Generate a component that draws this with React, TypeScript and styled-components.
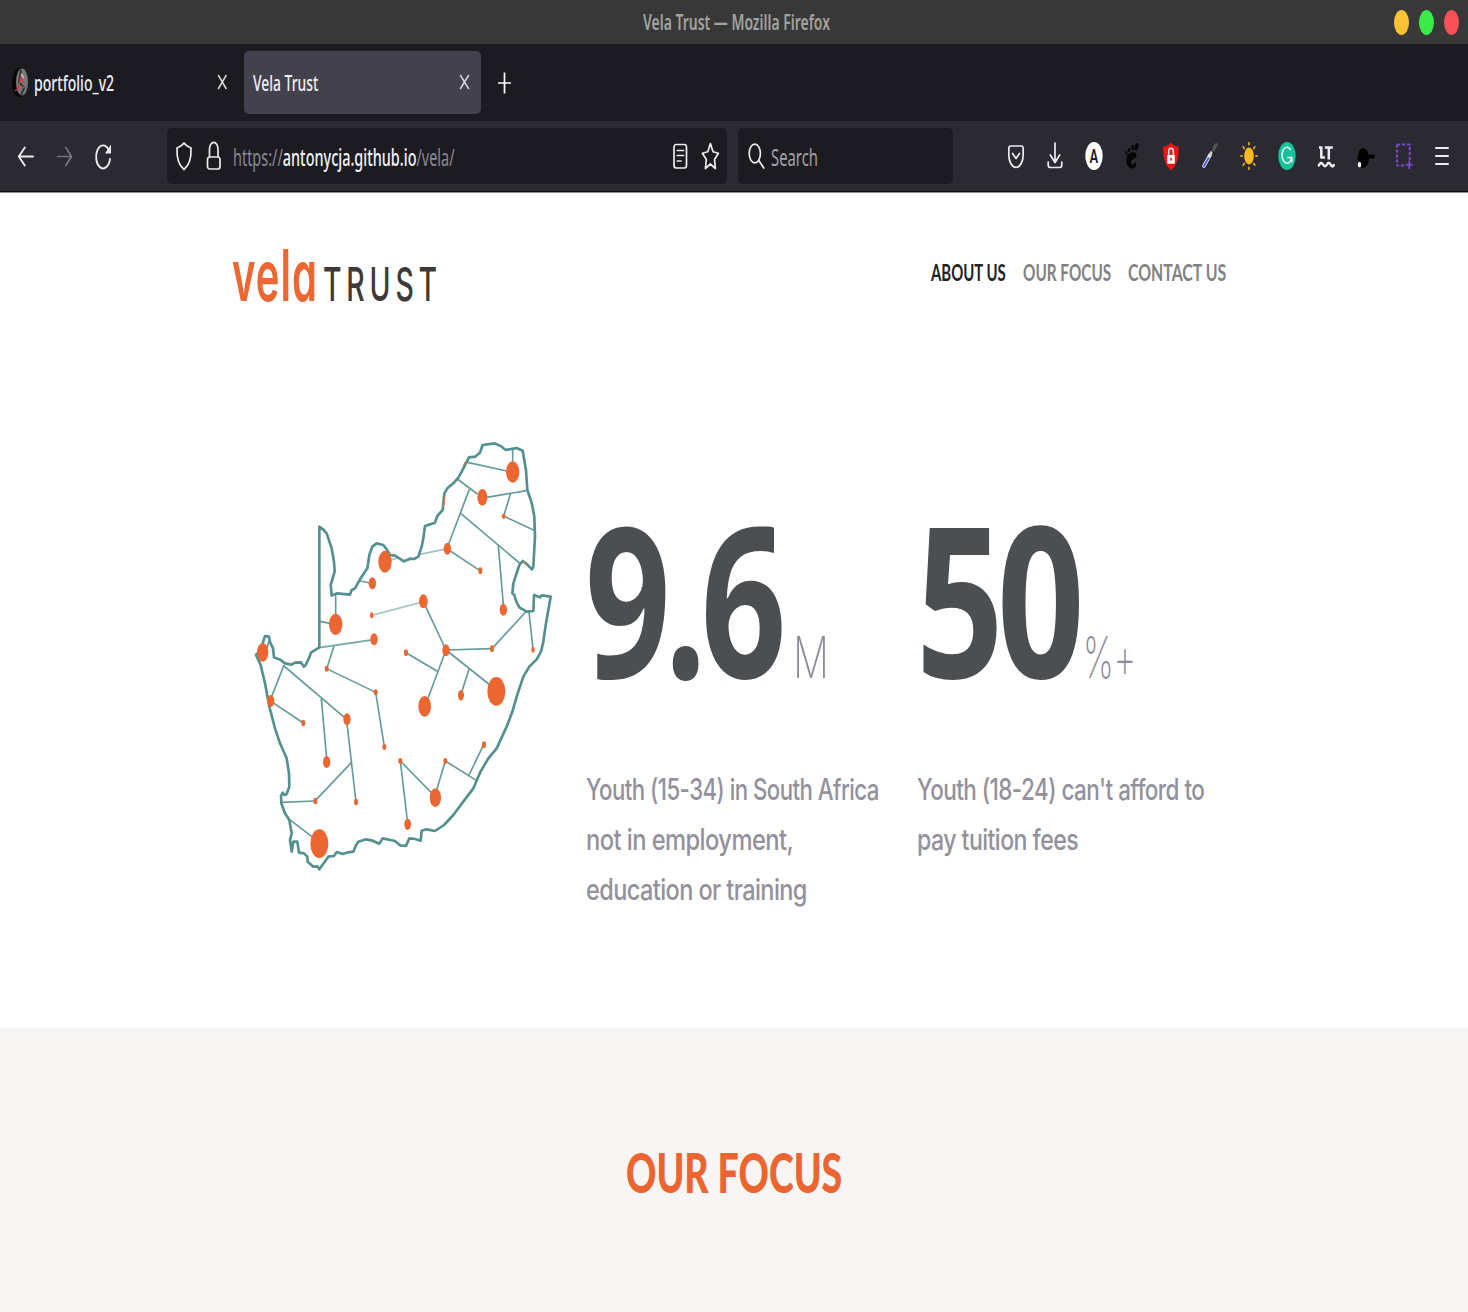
import React, { useLayoutEffect, useRef, useState } from "react";
import styled, { createGlobalStyle } from "styled-components";

const uiFont = `"Noto Sans", "Open Sans", sans-serif`;
const pageFont = `Inter, "Open Sans", sans-serif`;
const displayFont = `Lato, "Open Sans", sans-serif`;
const numberFont = `"Open Sans", "Noto Sans", sans-serif`;

const GlobalStyle = createGlobalStyle`
  *, *::before, *::after { box-sizing: border-box; }
  body { margin: 0; background: #fff; font-family: ${pageFont}; }
`;

/* Text condensed horizontally so that it fills a given width */
const FitBox = styled.span<{ $w: number }>`
  display: inline-block;
  flex: none;
  width: ${(p) => p.$w}px;
  white-space: nowrap;
`;
const FitInner = styled.span`
  display: inline-block;
  transform-origin: 0 50%;
  white-space: pre;
`;

function Fit({ w, children }: { w: number; children: React.ReactNode }) {
  const ref = useRef<HTMLSpanElement>(null);
  const [scale, setScale] = useState(1);
  useLayoutEffect(() => {
    if (ref.current) setScale(w / ref.current.offsetWidth);
  }, [w]);
  return (
    <FitBox $w={w}>
      <FitInner ref={ref} style={{ transform: `scaleX(${scale})` }}>
        {children}
      </FitInner>
    </FitBox>
  );
}

const Screen = styled.div`
  width: 1468px;
  height: 1312px;
  display: flex;
  flex-direction: column;
  overflow: hidden;
`;

const TitleBar = styled.header`
  height: 44px;
  flex: none;
  display: grid;
  grid-template-columns: 1fr auto 1fr;
  align-items: center;
  background: #383838;
  padding: 1px 9.5px 0 0;
  font: 600 21.5px/41px ${uiFont};
  color: #a3a39f;
`;
const WindowTitle = styled.div`
  grid-column: 2;
  margin-left: 14px;
  height: 43px;
`;
const WindowButtons = styled.div`
  display: flex;
  justify-content: flex-end;
  gap: 10px;
`;
const WindowButton = styled.i<{ $c: string }>`
  width: 15px;
  height: 25px;
  border-radius: 50%;
  background: ${(p) => p.$c};
`;

const TabStrip = styled.nav`
  height: 77px;
  flex: none;
  display: flex;
  align-items: center;
  background: #1c1b22;
  font: 500 22px/60px ${uiFont};
  color: #f0f0f4;
`;
const Tab = styled.div<{ $active?: boolean; $w: number }>`
  width: ${(p) => p.$w}px;
  height: 63px;
  display: flex;
  align-items: center;
  border-radius: 5px;
  padding: 0 ${(p) => (p.$active ? 11.5 : 12)}px 1px ${(p) => (p.$active ? 9 : 12)}px;
  background: ${(p) => (p.$active ? "#42414d" : "transparent")};
  svg:last-child { margin-left: auto; }
`;
const Favicon = styled.svg`
  margin-right: 6px;
`;
const NewTab = styled.svg`
  margin-left: 16px;
`;

const Toolbar = styled.div`
  height: 71px;
  flex: none;
  display: flex;
  align-items: center;
  background: #2b2a33;
  padding: 0 13.5px 1px 14px;
  font: 400 24px/56px ${uiFont};
`;
const Shadow = styled.div`
  height: 1px;
  flex: none;
  background: #8d8d90;
`;
const HardLine = styled.div`
  height: 1px;
  flex: none;
  margin-top: -1px;
  background: #0c0c0d;
`;
const NavIcons = styled.div`
  display: flex;
  width: 153px;
  gap: 14.7px;
`;
const Field = styled.div<{ $w: number; $left: number }>`
  width: ${(p) => p.$w}px;
  height: 56px;
  margin-right: 11px;
  padding: 0 5px 0 ${(p) => p.$left}px;
  display: flex;
  align-items: center;
  border-radius: 5px;
  background: #1c1b22;
`;
const FieldGap = styled.span`
  width: 6px;
`;
const Address = styled.div<{ $left: number; $c: string }>`
  flex: 1;
  height: 56px;
  margin-left: ${(p) => p.$left}px;
  padding-top: 1px;
  color: ${(p) => p.$c};
  b { font-weight: 500; color: #f4f4f8; }
`;
const Extensions = styled.div`
  flex: 1;
  display: flex;
  justify-content: space-between;
  margin-left: 40px;
`;
const Glyph = styled.svg`
  width: 24px;
  height: 36px;
  flex: none;
  overflow: visible;
  fill: none;
  stroke: #ececf1;
  stroke-width: 1.7;
  stroke-linecap: round;
  stroke-linejoin: round;
  text { stroke: none; }
`;
function Icon({ children }: { children: React.ReactNode }) {
  return <Glyph viewBox="0 0 24 36">{children}</Glyph>;
}

const SiteHeader = styled.header`
  height: 162px;
  flex: none;
  display: flex;
  align-items: center;
  justify-content: space-between;
  padding: 0 241.5px 0 232px;
`;
const Logo = styled.div`
  display: flex;
  align-items: baseline;
  height: 80px;
  padding-top: 3px;
`;
const LogoMark = styled.span`
  font: 600 71px/76px ${pageFont};
  font-feature-settings: "cv11";
  letter-spacing: 2px;
  color: #ee6730;
`;
const LogoWord = styled.span`
  margin-left: 5px;
  font: 500 47px/76px ${pageFont};
  letter-spacing: 8px;
  color: #3f3a38;
`;
const Menu = styled.nav`
  display: flex;
  gap: 17px;
  height: 44px;
  font: 700 23.5px/40px ${displayFont};
`;
const MenuItem = styled.a<{ $current?: boolean }>`
  color: ${(p) => (p.$current ? "#222222" : "#828282")};
`;

const Hero = styled.section`
  height: 673px;
  flex: none;
  display: flex;
  align-items: flex-start;
  padding: 75px 0 0 240px;
`;
const MapDrawing = styled.svg`
  width: 330px;
  height: 450px;
  flex: none;
  fill: none;
  stroke: #54908f;
  stroke-linejoin: round;
`;
const Stats = styled.div`
  display: grid;
  grid-template-columns: 331px 331px;
  padding: 66px 0 0 15px;
`;
const Figure = styled.div`
  height: 200px;
  display: flex;
  align-items: baseline;
  font: 700 210px/202px ${numberFont};
  letter-spacing: -9px;
  color: #4c4f51;
`;
const Unit = styled.span<{ $left: number }>`
  margin-left: ${(p) => p.$left}px;
  font: 200 58px/60px ${pageFont};
  letter-spacing: 0;
  font-feature-settings: "calt" 0;
  color: #8d8b96;
`;
const Caption = styled.p`
  margin: 69px 0 0 0.5px;
  font: 450 29.5px/49.8px ${pageFont};
  font-feature-settings: "calt" 0;
  letter-spacing: -0.7px;
  color: #93919b;
  display: flex;
  flex-direction: column;
`;

const Focus = styled.section`
  flex: 1;
  background: #f7f6f4;
  padding-top: 114px;
  text-align: center;
`;
const FocusTitle = styled.h2`
  margin: 0;
  font: 900 55px/60px ${displayFont};
  color: #ec6530;
`;

const outline =
  "238,290 238,652 213,668 208,682 197,705 191,710 183,697 165,698 155,704 135,700 122,690 102,682 99,655 90,636 87,620 75,618 68,640 62,660 48,675 62,705 75,760 88,830 105,895 120,940 140,985 147,1030 148,1070 140,1092 133,1095 128,1088 123,1098 124,1120 135,1150 148,1170 155,1210 150,1230 155,1265 160,1235 172,1235 177,1268 192,1270 202,1280 203,1295 220,1310 232,1309 238,1318 252,1298 265,1280 282,1278 290,1266 308,1272 325,1267 340,1265 348,1246 355,1235 378,1228 398,1232 418,1241 428,1225 465,1233 480,1246 498,1248 508,1225 525,1227 542,1232 545,1202 560,1198 585,1203 612,1185 640,1155 672,1112 700,1075 720,1028 745,985 770,955 800,890 818,842 830,800 850,740 868,710 890,688 903,665 910,635 918,580 932,500 905,496 900,502 882,495 880,543 860,545 838,532 828,513 823,495 817,490 820,460 838,405 848,393 860,402 876,418 880,410 885,320 883,260 875,218 862,180 858,120 848,62 830,54 797,60 785,50 765,40 728,45 720,68 705,80 687,82 665,125 655,143 640,160 622,175 613,190 608,240 592,258 585,278 555,288 550,325 545,350 535,380 522,387 510,386 492,394 465,377 450,375 440,358 430,345 410,340 397,350 388,375 382,415 360,448 345,475 335,480 330,494 290,490 275,497 272,465 284,425 282,395 275,355 260,310 248,297";

const links: [number, number, number, number, number?][] = [
  [683, 97, 800, 123], [818, 58, 818, 95], [652, 147, 712, 192], [740, 202, 860, 182],
  [812, 190, 792, 255], [792, 259, 882, 301], [688, 178, 626, 342], [662, 250, 842, 402],
  [775, 347, 790, 525], [622, 357, 720, 422], [540, 373, 612, 358, 0.55], [445, 392, 475, 384, 0.5],
  [360, 453, 390, 459], [287, 493, 287, 555], [240, 574, 270, 580], [395, 556, 540, 518, 0.5],
  [550, 515, 618, 660], [618, 660, 756, 656], [756, 656, 857, 546], [867, 546, 879, 658],
  [238, 653, 402, 629, 0.8], [282, 649, 260, 716], [260, 716, 407, 787, 0.8], [407, 787, 433, 950],
  [498, 668, 592, 724], [618, 660, 562, 810], [618, 660, 750, 765], [687, 718, 664, 790],
  [132, 705, 95, 800], [132, 708, 320, 868], [93, 814, 190, 879], [244, 806, 260, 985],
  [321, 880, 348, 1116], [334, 998, 226, 1112], [124, 1117, 226, 1113], [148, 1168, 216, 1220],
  [481, 993, 503, 1180], [481, 993, 578, 1092], [616, 993, 590, 1080], [616, 993, 710, 1052],
  [731, 944, 687, 1035],
];

const towns: [number, number, number, number][] = [
  [818, 126, 20, 32], [727, 202, 15, 25], [791, 259, 6, 8], [622, 356, 11, 18], [721, 422, 6, 10],
  [435, 395, 20, 33], [397, 460, 11, 18], [287, 583, 20, 32], [395, 556, 5, 9], [550, 514, 13, 21],
  [402, 628, 11, 18], [498, 668, 6, 10], [618, 661, 11, 18], [756, 656, 6, 10], [790, 539, 11, 18],
  [879, 659, 5, 9], [68, 667, 17, 28], [92, 813, 11, 18], [190, 879, 6, 10], [260, 716, 6, 9],
  [407, 787, 6, 9], [321, 868, 11, 18], [260, 996, 11, 18], [433, 951, 6, 9], [226, 1113, 6, 10],
  [348, 1116, 6, 10], [238, 1241, 27, 43], [554, 829, 19, 31], [663, 796, 9, 16], [769, 784, 27, 43],
  [732, 944, 6, 10], [616, 993, 6, 9], [586, 1103, 17, 28], [503, 1183, 10, 17], [481, 993, 6, 9],
];

function CountryMap() {
  return (
    <MapDrawing viewBox="0 0 990 1350">
      {links.map(([x1, y1, x2, y2, o], i) => (
        <line key={i} x1={x1} y1={y1} x2={x2} y2={y2} strokeWidth="5" opacity={o ?? 0.9} />
      ))}
      <polygon points={outline} strokeWidth="8" />
      <path d="M80 655 L88 632" strokeWidth="5" />
      <g fill="#ec6631" stroke="none">
        {towns.map(([x, y, rx, ry], i) => (
          <ellipse key={i} cx={x} cy={y} rx={rx} ry={ry} />
        ))}
        <path d="M611 193 Q619 212 608 235Z M681 94 L668 112 L672 98Z M850 395 L863 406 L860 397Z" />
      </g>
    </MapDrawing>
  );
}

const Cross = () => (
  <svg width="11" height="18" viewBox="0 0 11 18" stroke="#d6d6dc" strokeWidth="1.5">
    <path d="M1.2 2 L9.8 16 M9.8 2 L1.2 16" />
  </svg>
);

export default function App() {
  return (
    <Screen>
      <GlobalStyle />
      <TitleBar>
        <WindowTitle><Fit w={187}>Vela Trust — Mozilla Firefox</Fit></WindowTitle>
        <WindowButtons>
          <WindowButton $c="#fcc236" />
          <WindowButton $c="#3aea49" />
          <WindowButton $c="#f75057" />
        </WindowButtons>
      </TitleBar>

      <TabStrip>
        <Tab $w={244}>
          <Favicon width="16" height="29" viewBox="0 0 16 29">
            <ellipse cx="7.5" cy="14.5" rx="7.5" ry="14.5" fill="#080808" />
            <ellipse cx="10" cy="14" rx="6" ry="13.5" fill="#77777a" />
            <path d="M9 2 L7 14 L12 20 L9 27" fill="none" stroke="#333" strokeWidth="2" />
            <path d="M3 23 L6 21 L9 9 L12 15 M7 17 L12 20" fill="none" stroke="#dc3c46" strokeWidth="1.3" />
            <path d="M9 6 L12 10" stroke="#c8c8c8" strokeWidth="1.4" />
          </Favicon>
          <Fit w={80}>portfolio_v2</Fit>
          <svg width="16" height="18" viewBox="0 0 16 18" stroke="#d6d6dc" strokeWidth="1.5">
            <path d="M2.2 2 L10.4 16 M10.4 2 L2.2 16" />
          </svg>
        </Tab>
        <Tab $w={237} $active>
          <Fit w={65}>Vela Trust</Fit>
          <Cross />
        </Tab>
        <NewTab width="15" height="24" viewBox="0 0 15 24" stroke="#fbfbfe" strokeWidth="1.7">
          <path d="M7.5 1.5 V22.5 M1 12 H14" />
        </NewTab>
      </TabStrip>

      <Toolbar>
        <NavIcons>
          <Icon><path d="M19 18.5 H4.800 M10.800 9.500 L4.800 18.500 L10.800 27.500" strokeWidth="1.900" /></Icon>
          <Icon><path d="M4.500 18.500 H18.500 M12.800 9.500 L18.500 18.500 L12.800 27.500" stroke="#77767d" /></Icon>
          <Icon>
            <path d="M19 21 A7 11.500 0 1 1 17.500 11.500" strokeWidth="1.900" />
            <path d="M20 6.500 V15.500 H14 Z" fill="#ececf1" stroke="none" />
          </Icon>
        </NavIcons>
        <Field $w={560} $left={5}>
          <Icon><path d="M12 5 C14 8 17 9 19 10 C19.5 20 17.5 27 12 31.5 C6.500 27 4.500 20 5 10 C7 9 10 8 12 5Z" /></Icon>
          <FieldGap />
          <Icon>
            <path d="M7.500 19 H16 A2 3 0 0 1 18 22 V28 A2 3 0 0 1 16 31 H7.500 A2 3 0 0 1 5.500 28 V22 A2 3 0 0 1 7.500 19Z M7.500 19 V11 A4.200 6.500 0 0 1 16 11 V19" />
          </Icon>
          <Address $left={6.5} $c="#8a8a91"><Fit w={221.5}>https://<b>antonycja.github.io</b>/vela/</Fit></Address>
          <Icon>
            <rect x="6" y="6.500" width="12.500" height="23.500" rx="2" ry="3" />
            <path d="M9.300 12.500 H15.500 M9.300 17.500 H15.500 M9.300 23 H13" />
          </Icon>
          <FieldGap />
          <Icon><path d="M12.400 5.500 L15 13.800 L20.400 15.300 L16.500 21.500 L17.400 30.500 L12.400 26 L7.400 30.500 L8.300 21.500 L4.400 15.300 L9.800 13.800 Z" /></Icon>
        </Field>
        <Field $w={215} $left={6}>
          <Icon>
            <ellipse cx="10.800" cy="15.500" rx="5.600" ry="9.300" />
            <path d="M14.800 22.500 L19.800 30" />
          </Icon>
          <Address $left={3} $c="#a2a2a8"><Fit w={47}>Search</Fit></Address>
        </Field>
        <Extensions>
          <Icon>
            <path d="M6.500 8 H17.500 Q19.200 8 19.200 11 V17 A7.200 12.300 0 0 1 4.800 17 V11 Q4.800 8 6.500 8Z" />
            <path d="M8.500 15.500 L12 20.500 L15.500 15.500" />
          </Icon>
          <Icon><path d="M12 5 V24 M7.300 17 L12 24.500 L16.700 17 M5.200 24 V26.500 Q5.200 29.500 7 29.500 H17 Q18.800 29.500 18.800 26.500 V24" /></Icon>
          <Icon>
            <ellipse cx="12" cy="18" rx="8.700" ry="14" fill="#fff" stroke="none" />
            <text transform="translate(12 25) scale(.62 1)" textAnchor="middle" fontFamily="Lato, sans-serif" fontWeight="900" fontSize="19" fill="#222">A</text>
          </Icon>
          <Icon>
            <g fill="#050505" stroke="none">
              <ellipse cx="6.300" cy="15" rx="1.100" ry="2" />
              <ellipse cx="9.200" cy="12" rx="1.200" ry="2.300" />
              <ellipse cx="12.600" cy="9.500" rx="1.300" ry="2.700" />
              <ellipse cx="16.500" cy="8.800" rx="1.900" ry="3.800" transform="rotate(14 16.500 8.800)" />
              <path d="M16.500 17 C16 12 6.500 14 6.300 21 C6 27 9 31 12.500 30.500 C16 30 17 26 15.500 23.500 L14 26 C11.500 28 10 24 11.800 22.500 C14 21 16.500 20 16.500 17Z" />
            </g>
          </Icon>
          <Icon>
            <path d="M12 4.500 C14 7 17 8.500 19.700 8.500 C20 20 18 27 12 32.500 C6 27 4 20 4.300 8.500 C7 8.500 10 7 12 4.500Z" fill="#f11313" stroke="none" />
            <rect x="8.200" y="17" width="7.600" height="8.800" rx=".8" fill="#fff" stroke="none" />
            <path d="M9.700 17 V13.500 A2.300 3.300 0 0 1 14.300 13.500 V17" strokeWidth="1.500" />
            <ellipse cx="12" cy="21.200" rx=".8" ry="1.700" fill="#f11313" stroke="none" />
          </Icon>
          <Icon>
            <path d="M6 28 L12 17" stroke="#f4f6ff" strokeWidth="3.600" />
            <path d="M6 28 L10.500 20" stroke="#3f66cf" strokeWidth="2" />
            <path d="M12 17 L14.500 12.500" stroke="#cfcfcf" strokeWidth="2.600" />
            <path d="M12.700 10.500 L16.500 16" stroke="#1d1d1d" strokeWidth="1.500" />
            <path d="M15.300 12 L18.300 6.500" stroke="#55534f" strokeWidth="3" />
          </Icon>
          <Icon>
            <ellipse cx="12" cy="18" rx="4.800" ry="8.500" fill="#fcb91e" stroke="none" />
            <path d="M12 4.700 V6.500 M12 29.500 V31.300 M4 18 H5 M19 18 H20 M6.200 8.800 L7.300 10.500 M17.800 8.800 L16.700 10.500 M6.200 27.200 L7.300 25.500 M17.800 27.200 L16.700 25.500" stroke="#dca322" strokeWidth="1.800" />
          </Icon>
          <Icon>
            <ellipse cx="12" cy="18" rx="8.700" ry="14" fill="#15c39a" stroke="none" />
            <path d="M15.500 11.500 A5 8 0 1 0 16.800 19.500 H12.800 M16.800 19.500 V24" strokeWidth="1.600" />
          </Icon>
          <Icon>
            <path d="M7.300 8.500 V19.500 H11 M10.800 9.500 H18.800 M14.800 8.500 V21.500 M5 9.500 H8" strokeWidth="2.500" strokeLinecap="butt" />
            <path d="M4.800 27.500 Q7 23 9 26.500 T13 26.500 T16.500 26.500 T19.800 27" strokeWidth="2.500" />
          </Icon>
          <Icon>
            <ellipse cx="10.200" cy="20" rx="5.700" ry="10" fill="#000" stroke="none" />
            <path d="M14 18.500 H20" stroke="#000" strokeWidth="4" />
            <ellipse cx="6.500" cy="26.500" rx="1.700" ry="2.700" fill="#fff" stroke="none" />
          </Icon>
          <Icon>
            <path d="M5 6.500 H17.800 V22 M5 6.500 V27.500 H14" stroke="#7449c4" strokeWidth="2.200" strokeDasharray="3.200 1.800" strokeLinecap="butt" />
            <path d="M17.300 22.500 V31 M14 26.800 H20.500" stroke="#7449c4" strokeWidth="2" strokeLinecap="butt" />
          </Icon>
          <Icon><path d="M6 10 H18 M6 18 H18 M6 26 H18" strokeWidth="2" /></Icon>
        </Extensions>
      </Toolbar>
      <HardLine />
      <Shadow />

      <SiteHeader>
        <Logo>
          <LogoMark><Fit w={86}>vela</Fit></LogoMark>
          <LogoWord><Fit w={119}>TRUST</Fit></LogoWord>
        </Logo>
        <Menu>
          <MenuItem $current><Fit w={75}>ABOUT US</Fit></MenuItem>
          <MenuItem><Fit w={88}>OUR FOCUS</Fit></MenuItem>
          <MenuItem><Fit w={98.5}>CONTACT US</Fit></MenuItem>
        </Menu>
      </SiteHeader>

      <Hero>
        <CountryMap />
        <Stats>
          <div>
            <Figure>
              <Fit w={195}>9.6</Fit>
              <Unit $left={12.5}><Fit w={36}>M</Fit></Unit>
            </Figure>
            <Caption>
              <Fit w={293}>Youth (15-34) in South Africa</Fit>
              <Fit w={207.5}>not in employment,</Fit>
              <Fit w={220.5}>education or training</Fit>
            </Caption>
          </div>
          <div>
            <Figure>
              <Fit w={162}>50</Fit>
              <Unit $left={4.5}><Fit w={53}>%+</Fit></Unit>
            </Figure>
            <Caption>
              <Fit w={287}>Youth (18-24) can't afford to</Fit>
              <Fit w={161.5}>pay tuition fees</Fit>
            </Caption>
          </div>
        </Stats>
      </Hero>

      <Focus>
        <FocusTitle><Fit w={216}>OUR FOCUS</Fit></FocusTitle>
      </Focus>
    </Screen>
  );
}
